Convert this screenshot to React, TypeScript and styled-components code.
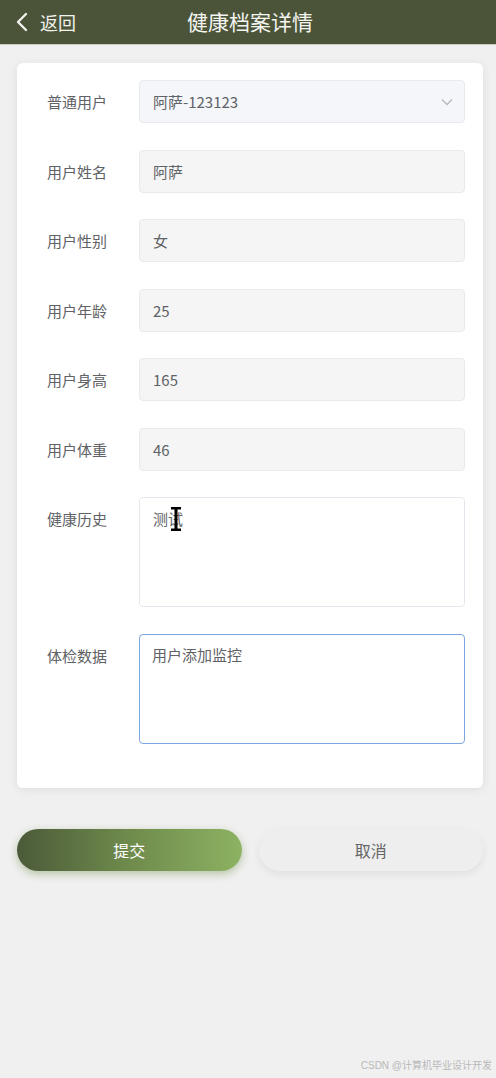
import React from "react";
import styled, { createGlobalStyle } from "styled-components";

const Global = createGlobalStyle`
  html, body { margin: 0; padding: 0; background: #f0f0f0; }
  body { font-family: "Noto Sans CJK SC", "Noto Sans", sans-serif; min-height: 1078px; }
  * { box-sizing: border-box; }
`;

const Page = styled.div`
  min-height: 1078px;
  background: #f0f0f0;
  position: relative;
`;

const Header = styled.header`
  height: 45px;
  background: #4b5438;
  border-bottom: 1px solid #c9cfbf;
  display: grid;
  grid-template-columns: 1fr auto 1fr;
  align-items: center;
  padding: 0 15px;
`;

const Back = styled.div`
  display: flex;
  align-items: center;
  gap: 11px;
  color: #f2f2ee;
  font-size: 18px;
`;

const Title = styled.div`
  color: #f4f4f0;
  font-size: 21px;
  font-weight: 400;
  padding-left: 4px;
  padding-bottom: 2px;
`;

const Content = styled.main`
  padding: 18px 13px 0 17px;
`;

const Card = styled.section`
  background: #fff;
  border-radius: 6px;
  box-shadow: 0 2px 10px rgba(0, 0, 0, 0.08);
  padding: 17px 18px 18px 30px;
  display: flex;
  flex-direction: column;
  gap: 26.5px;
`;

const Row = styled.div`
  display: grid;
  grid-template-columns: 92px 1fr;
  align-items: start;
`;

const Label = styled.label`
  font-size: 15px;
  line-height: 43px;
  color: #606266;
`;

const Field = styled.div<{ $bg: string }>`
  height: 43px;
  background: ${(p) => p.$bg};
  border: 1px solid #e8eaee;
  border-radius: 4px;
  display: flex;
  align-items: center;
  justify-content: space-between;
  padding: 0 10px 0 13px;
  font-size: 15px;
  color: #5f6266;
`;

const Area = styled.div<{ $focus?: boolean }>`
  position: relative;
  height: 110px;
  background: #fff;
  border: ${(p) => (p.$focus ? "1.5px solid #7ea7e2" : "1px solid #e4e7ed")};
  border-radius: 4px;
  padding: ${(p) => (p.$focus ? "9px 12px" : "10px 13px")};
  font-size: 15px;
  line-height: 22px;
  color: #5f6266;
`;

const Cursor = styled.svg`
  position: absolute;
  left: 30px;
  top: 9px;
`;

const Actions = styled.div`
  display: grid;
  grid-template-columns: 1fr 1fr;
  gap: 17px;
  margin-top: 41px;
`;

const Btn = styled.div<{ $primary?: boolean }>`
  height: 42px;
  border-radius: 21px;
  display: flex;
  align-items: center;
  justify-content: center;
  font-size: 16px;
  color: ${(p) => (p.$primary ? "#fff" : "#666")};
  background: ${(p) =>
    p.$primary ? "linear-gradient(90deg, #4b5a39 0%, #6f8b4c 50%, #8db262 100%)" : "#eeeeee"};
  box-shadow: ${(p) =>
    p.$primary ? "0 3px 8px rgba(110, 140, 70, 0.45)" : "0 3px 8px rgba(0, 0, 0, 0.07)"};
`;

const Watermark = styled.div`
  position: absolute;
  right: 4px;
  bottom: 6px;
  font-size: 10px;
  color: #b8b8b8;
  font-family: "Liberation Sans", "Noto Sans CJK SC", sans-serif;
`;

const rows = [
  { label: "用户姓名", value: "阿萨" },
  { label: "用户性别", value: "女" },
  { label: "用户年龄", value: "25" },
  { label: "用户身高", value: "165" },
  { label: "用户体重", value: "46" },
];

export default function App() {
  return (
    <Page>
      <Global />
      <Header>
        <Back>
          <svg width="14" height="20" viewBox="0 0 14 20">
            <path d="M11 2 L3 10 L11 18" fill="none" stroke="#f2f2ee" strokeWidth="2.4" strokeLinecap="round" strokeLinejoin="round" />
          </svg>
          返回
        </Back>
        <Title>健康档案详情</Title>
        <div />
      </Header>
      <Content>
        <Card>
          <Row>
            <Label>普通用户</Label>
            <Field $bg="#f4f6f9">
              阿萨-123123
              <svg width="14" height="10" viewBox="0 0 14 10">
                <path d="M2 2.5 L7 7.5 L12 2.5" fill="none" stroke="#b4b8bf" strokeWidth="1.3" />
              </svg>
            </Field>
          </Row>
          {rows.map((r) => (
            <Row key={r.label}>
              <Label>{r.label}</Label>
              <Field $bg="#f5f5f5">{r.value}</Field>
            </Row>
          ))}
          <Row>
            <Label>健康历史</Label>
            <Area>
              测试
              <Cursor width="12" height="24" viewBox="0 0 12 24">
                <path d="M1 1 H11 M6 1 V23 M1 23 H11" stroke="#000" strokeWidth="3" fill="none" />
              </Cursor>
            </Area>
          </Row>
          <Row>
            <Label>体检数据</Label>
            <Area $focus>用户添加监控</Area>
          </Row>
          <div />
        </Card>
        <Actions>
          <Btn $primary>提交</Btn>
          <Btn>取消</Btn>
        </Actions>
      </Content>
      <Watermark>CSDN @计算机毕业设计开发</Watermark>
    </Page>
  );
}
